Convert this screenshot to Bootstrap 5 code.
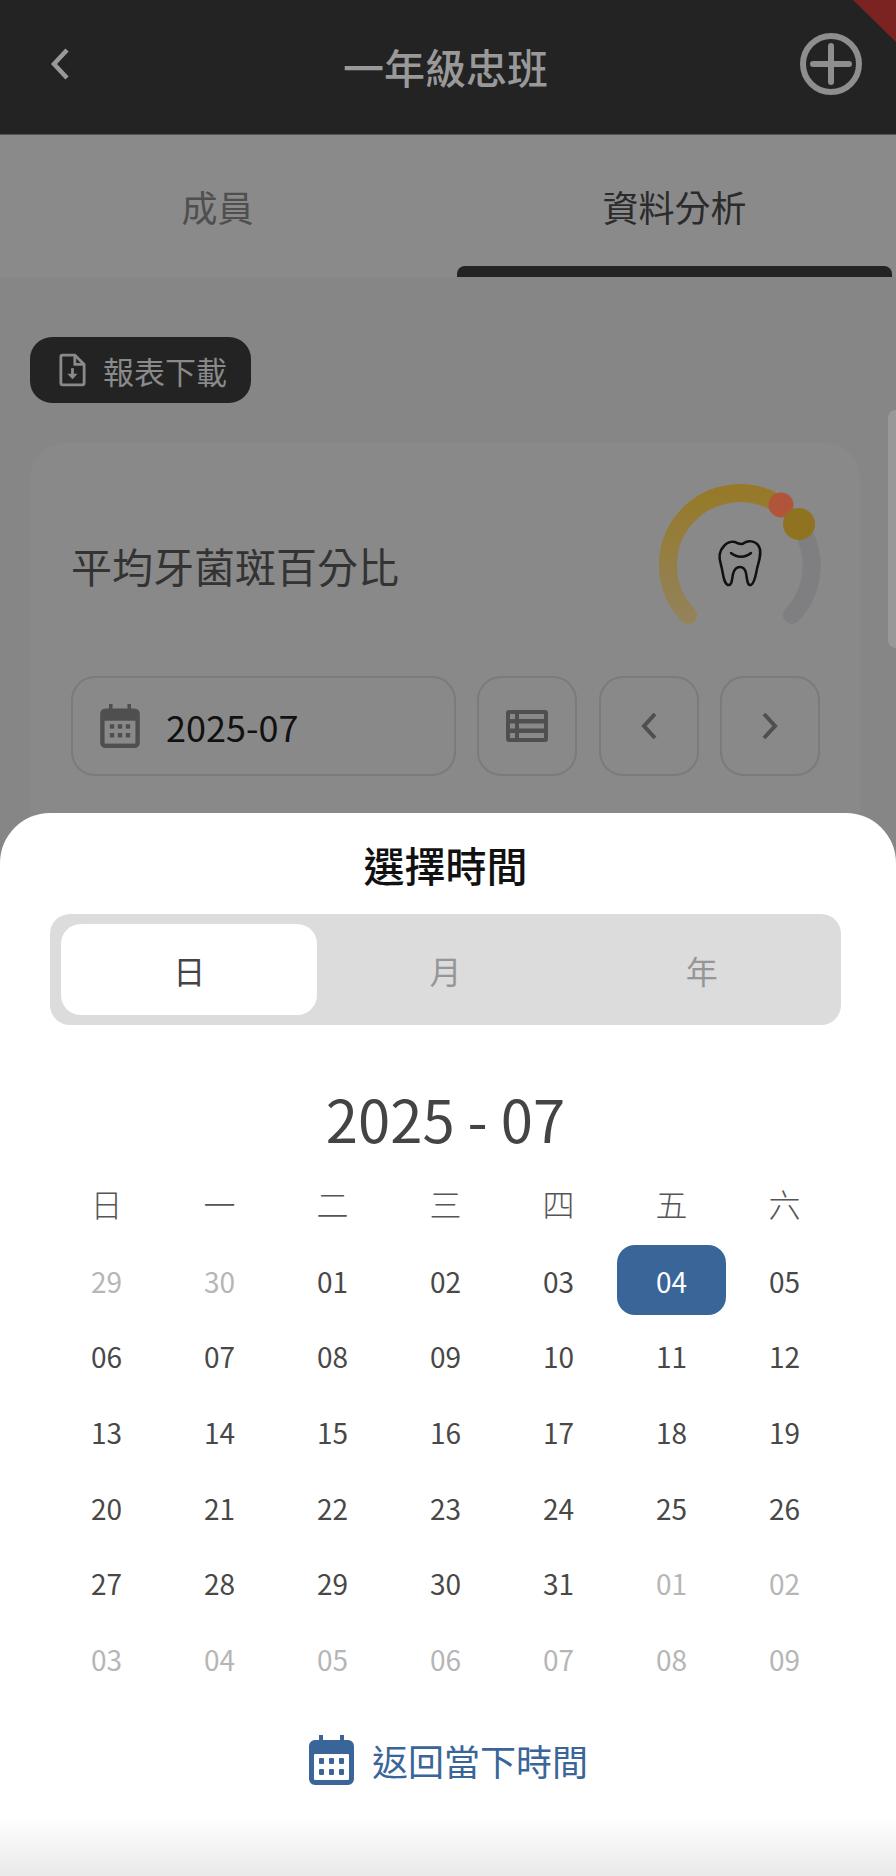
<!DOCTYPE html>
<html lang="zh-Hant">
<head>
  <meta charset="UTF-8">
  <title>一年級忠班</title>
  <meta name="viewport" content="width=device-width, initial-scale=1">
  <link href="https://cdn.jsdelivr.net/npm/bootstrap@5.3.0/dist/css/bootstrap.min.css" rel="stylesheet">
  <style>
    html, body { height: 1876px; overflow: hidden; }
    body { background: #868686; font-family: "Noto Sans CJK TC", "Noto Sans", sans-serif; position: relative; }

    .app-head { height: 135px; background: #232323; color: #999; padding: 0 32px 6px 46px; border-bottom: 1px solid #555; }
    .app-title { font-size: 41px; line-height: 1; margin: 4px 0 0 21px; font-weight: 500; }
    .debug-corner { position: absolute; top: 0; right: 0; width: 43px; height: 42px; background: #7a2320; clip-path: polygon(0 0, 100% 0, 100% 100%); }

    .tab-bar { height: 142px; background: #8a8a8a; display: grid; grid-template-columns: 1fr 1fr; gap: 22px; padding-right: 4px; }
    .tab-item { font-size: 36px; line-height: 1; color: #4f4f4f; padding-top: 53px; text-align: center; position: relative; }
    .tab-item.is-on { color: #2b2b2b; }
    .tab-item.is-on::after { content: ""; position: absolute; left: 0; right: 0; bottom: 0; height: 11px; background: #232323; border-radius: 8px 8px 0 0; }

    .report-btn { display: inline-flex; align-items: center; gap: 17px; height: 66px; width: 221px; margin: 60px 0 0 30px; padding: 0 0 0 29px; background: #232323; color: #8a8a8a; border: 0; border-radius: 22px; font-size: 31px; line-height: 1; }

    .plaque-card { background: #898989; border: 0; border-radius: 34px; margin: 40px 36px 0 30px; height: 500px; padding: 0 40px 0 41px; }
    .plaque-top { height: 233px; }
    .plaque-title { font-size: 41px; line-height: 1; color: #333; margin: 12px 0 0; font-weight: 400; }
    .gauge { width: 180px; height: 180px; margin-right: -10px; margin-top: 11px; }
    .date-box, .icon-box { height: 100px; border: 2px solid #7b7b7b; border-radius: 24px; }
    .date-box { width: 385px; padding-left: 27px; gap: 26px; color: #111; font-size: 36px; line-height: 1; }
    .icon-box { width: 100px; }
    .ctrl-row { gap: 21.5px; }

    .side-handle { position: absolute; top: 410px; right: 0; width: 8px; height: 238px; background: #989898; border-radius: 8px 0 0 8px; }

    .time-sheet { height: 1063px; border-radius: 50px 50px 0 0; background: linear-gradient(#fff calc(100% - 60px), #e9e9e9); padding: 0 55px 0 50px; }
    .sheet-title { font-size: 41px; line-height: 1; font-weight: 500; color: #111; text-align: center; margin: 31px 0 29px; }

    .seg-box { height: 111px; padding: 10px 11px; background: #dcdcdc; border-radius: 20px; display: grid; grid-template-columns: repeat(3, 1fr); }
    .seg-item { font-size: 32px; line-height: 1; color: #969696; display: flex; align-items: center; justify-content: center; border-radius: 20px; }
    .seg-item.is-on { background: #fff; color: #444; }

    .month-title { font-size: 58px; line-height: 1; color: #444; text-align: center; margin: 64px 0 20px; font-weight: 400; }

    .cal-grid { display: grid; grid-template-columns: repeat(7, 113px); grid-auto-rows: 75.7px; text-align: center; }
    .cal-grid > div { display: flex; align-items: center; justify-content: center; font-size: 28px; line-height: 1; color: #484848; }
    .cal-grid > .wd { font-size: 32px; font-weight: 300; color: #555; padding-bottom: 3px; }
    .cal-grid > .off { color: #b6b6b6; }
    .cal-grid > .sel { color: #fff; position: relative; z-index: 0; }
    .cal-grid > .sel::before { content: ""; position: absolute; z-index: -1; left: 2px; right: 2px; top: 2px; bottom: 3px; background: #3a6598; border-radius: 18px; }

    .back-now { gap: 18px; margin-top: 38px; margin-left: 6px; color: #3a6598; font-size: 36px; line-height: 1; }
  </style>
</head>
<body>
  <!-- Header -->
  <div class="app-head d-flex align-items-center justify-content-between">
    <svg width="26" height="34" viewBox="0 0 26 34" fill="none" stroke="#999" stroke-width="4.5"><path d="M21 3 8 17l13 14"/></svg>
    <h1 class="app-title">一年級忠班</h1>
    <svg width="66" height="66" viewBox="0 0 66 66" fill="none" stroke="#8e8e8e" stroke-width="6"><circle cx="33" cy="33" r="28"/><path d="M15 33h36M33 15v36" stroke-linecap="round"/></svg>
  </div>
  <div class="debug-corner"></div>

  <!-- Tabs -->
  <div class="tab-bar">
    <div class="tab-item">成員</div>
    <div class="tab-item is-on">資料分析</div>
  </div>

  <button class="report-btn" type="button">
    <svg width="27" height="34" viewBox="0 0 29 36" fill="none" stroke="#8a8a8a" stroke-width="3"><path d="M4 2h13l10 10v20a2 2 0 0 1-2 2H4a2 2 0 0 1-2-2V4a2 2 0 0 1 2-2Z"/><path d="M17 2v10h10"/><path d="M14.500 16v8" /><path d="M9 22h11l-5.500 6Z" fill="#8a8a8a" stroke="none"/></svg>
    報表下載
  </button>

  <!-- Plaque card -->
  <div class="card plaque-card">
    <div class="plaque-top d-flex align-items-center justify-content-between">
      <h2 class="plaque-title">平均牙菌斑百分比</h2>
      <svg class="gauge" viewBox="0 0 180 180" fill="none" stroke-linecap="round">
        <defs>
          <linearGradient id="goldArc" x1="0" y1="0" x2="0" y2="1">
            <stop offset="0" stop-color="#967a2a"/>
            <stop offset="1" stop-color="#93825a"/>
          </linearGradient>
        </defs>
        <path d="M142 140A72 72 0 0 0 157 65" stroke="#7f7e80" stroke-width="18"/>
        <path d="M38 140A72 72 0 0 1 131 31" stroke="url(#goldArc)" stroke-width="18"/>
        <circle cx="131" cy="30" r="12.500" fill="#b0553a"/>
        <circle cx="149" cy="49" r="16" fill="#8f7320"/>
        <g transform="translate(2 1)">
          <path d="M72 70c4-5 10-5 13-3 3 1 5 2 7 0 4-3 11-2 14 2 4 5 2 13 0 20-2 5-2 17-7 20-4 1-4-7-5-12-1-4-3-6-6-6-4 0-6 3-7 7-1 5-1 12-5 11-5-2-5-14-7-20-2-6-3-13 3-19Z" stroke="#111" stroke-width="2.500" stroke-linejoin="round"/>
          <path d="M79 77c6 5 14 5 20 0" stroke="#111" stroke-width="2.500"/>
        </g>
      </svg>
    </div>
    <div class="d-flex ctrl-row">
      <div class="date-box d-flex align-items-center">
        <svg width="40" height="44" viewBox="0 0 45 50" aria-hidden="true"><path d="M10 0h4v5h17V0h4v5h4a6 6 0 0 1 6 6v33a6 6 0 0 1-6 6H6a6 6 0 0 1-6-6V11a6 6 0 0 1 6-6h4Z" fill="#4f4f4f"/><rect x="5" y="19" width="35" height="26" fill="#898989"/><g fill="#4f4f4f"><rect x="11" y="23" width="5" height="5"/><rect x="20" y="23" width="5" height="5"/><rect x="29" y="23" width="5" height="5"/><rect x="11" y="33" width="5" height="5"/><rect x="20" y="33" width="5" height="5"/><rect x="29" y="33" width="5" height="5"/></g></svg>
        <span>2025-07</span>
      </div>
      <div class="icon-box d-flex align-items-center justify-content-center">
        <svg width="42" height="32" viewBox="0 0 42 32"><rect width="42" height="32" rx="3" fill="#4f4f4f"/><g fill="#898989"><rect x="4" y="4" width="5" height="5"/><rect x="4" y="13.500" width="5" height="5"/><rect x="4" y="23" width="5" height="5"/><rect x="13" y="4" width="25" height="5"/><rect x="13" y="13.500" width="25" height="5"/><rect x="13" y="23" width="25" height="5"/></g></svg>
      </div>
      <div class="icon-box d-flex align-items-center justify-content-center">
        <svg width="20" height="28" viewBox="0 0 20 28" fill="none" stroke="#4f4f4f" stroke-width="4"><path d="M16 2 5 14l11 12"/></svg>
      </div>
      <div class="icon-box d-flex align-items-center justify-content-center">
        <svg width="20" height="28" viewBox="0 0 20 28" fill="none" stroke="#4f4f4f" stroke-width="4"><path d="m4 2 11 12L4 26"/></svg>
      </div>
    </div>
  </div>
  <div class="side-handle"></div>

  <!-- Time picker sheet -->
  <div class="position-fixed bottom-0 start-0 end-0 time-sheet">
    <h3 class="sheet-title">選擇時間</h3>
    <div class="seg-box">
      <div class="seg-item is-on">日</div>
      <div class="seg-item">月</div>
      <div class="seg-item">年</div>
    </div>
    <div class="month-title">2025 - 07</div>
    <div class="cal-grid" id="cal"></div>
    <div class="back-now d-flex align-items-center justify-content-center">
      <svg width="45" height="50" viewBox="0 0 45 50" aria-hidden="true"><path d="M10 0h4v5h17V0h4v5h4a6 6 0 0 1 6 6v33a6 6 0 0 1-6 6H6a6 6 0 0 1-6-6V11a6 6 0 0 1 6-6h4Z" fill="#3a6598"/><rect x="5" y="19" width="35" height="26" rx="1" fill="#fff"/><g fill="#3a6598"><rect x="10" y="23" width="5" height="6" rx="1"/><rect x="20" y="23" width="5" height="6" rx="1"/><rect x="30" y="23" width="5" height="6" rx="1"/><rect x="10" y="34" width="5" height="6" rx="1"/><rect x="20" y="34" width="5" height="6" rx="1"/><rect x="30" y="34" width="5" height="6" rx="1"/></g></svg>
      <span>返回當下時間</span>
    </div>
  </div>

  <script src="https://cdn.jsdelivr.net/npm/bootstrap@5.3.0/dist/js/bootstrap.bundle.min.js"></script>
  <script>
    // Calendar cells: June tail, July, August head
    const cal = document.getElementById("cal");
    const pad = n => String(n).padStart(2, "0");
    let html = "";
    ["日", "一", "二", "三", "四", "五", "六"].forEach(d => { html += `<div class="wd">${d}</div>`; });
    [29, 30].forEach(d => { html += `<div class="off">${d}</div>`; });
    for (let d = 1; d <= 31; d++) {
      html += `<div class="${d === 4 ? "sel" : ""}">${pad(d)}</div>`;
    }
    for (let d = 1; d <= 9; d++) {
      html += `<div class="off">${pad(d)}</div>`;
    }
    cal.innerHTML = html;
  </script>
</body>
</html>
